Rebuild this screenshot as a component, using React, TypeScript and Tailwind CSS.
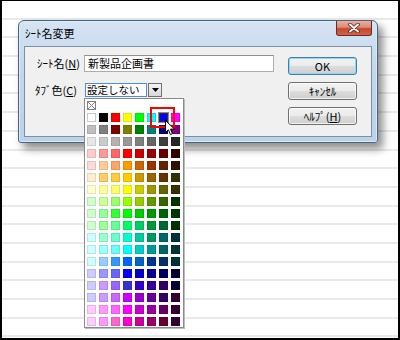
import React from 'react';

const palette: string[][] = [
    ['#ffffff', '#000000', '#ff0000', '#ffff00', '#00ff00', '#00ffff', '#0000ff', '#ff00ff'],
    ['#c0c0c0', '#808080', '#800000', '#808000', '#008000', '#008080', '#000080', '#800080'],
    ['#e6e6e6', '#cccccc', '#b3b3b3', '#999999', '#808080', '#666666', '#404040', '#262626'],
    ['#ffcccc', '#ff9999', '#ff6666', '#ff0000', '#cc0000', '#990000', '#660000', '#330000'],
    ['#ffd9d9', '#ffcc99', '#ffa566', '#ff9900', '#cc6600', '#993300', '#662200', '#331100'],
    ['#ffeecc', '#ffcc66', '#ffcc33', '#ffcc00', '#cc9900', '#996600', '#663300', '#333300'],
    ['#ffffcc', '#ffff99', '#ffff66', '#ffff00', '#cccc00', '#999900', '#666600', '#333300'],
    ['#ccffcc', '#ccff99', '#99ff66', '#99ff00', '#99cc00', '#669900', '#336600', '#003300'],
    ['#ccffcc', '#99ff99', '#33ff33', '#00ff00', '#00cc00', '#009900', '#006600', '#003300'],
    ['#ccffcc', '#99ff99', '#66ff99', '#00ff66', '#00cc66', '#009933', '#006633', '#003300'],
    ['#ccffff', '#99ffcc', '#66ffcc', '#00ffcc', '#00cc99', '#009966', '#006666', '#003333'],
    ['#ccffff', '#99ffff', '#66ffff', '#00ffff', '#00cccc', '#009999', '#006666', '#003333'],
    ['#ccffff', '#99ccff', '#3399ff', '#0066ff', '#0066cc', '#003399', '#003366', '#003333'],
    ['#ccccff', '#9999ff', '#6666ff', '#0000ff', '#0000cc', '#000099', '#000066', '#000033'],
    ['#ccccff', '#cc99ff', '#9966ff', '#3333cc', '#3300cc', '#330099', '#330066', '#000033'],
    ['#ccccff', '#cc99ff', '#cc66ff', '#cc00ff', '#9900cc', '#660099', '#330066', '#330033'],
    ['#ffccff', '#ff99ff', '#ff66ff', '#ff00ff', '#cc00cc', '#990099', '#660066', '#330033'],
    ['#ffccff', '#ff99ff', '#ff66cc', '#ff00cc', '#cc0099', '#990066', '#660033', '#330033'],
];

const font = "font-['Noto_Sans_CJK_JP',sans-serif]";

function VistaButton({ children, isDefault }: { children: React.ReactNode; isDefault?: boolean }) {
    return (
        <div
            className={
                'w-[69px] h-[18px] rounded-[3px] border flex items-center justify-center text-[11px] leading-none text-black bg-[linear-gradient(#f2f2f2_0%,#ebebeb_50%,#dddddd_50%,#cfcfcf_100%)] ' +
                (isDefault
                    ? 'border-[#3c7fb1] shadow-[inset_0_0_0_1px_#8fd6f7]'
                    : 'border-[#707070] shadow-[inset_0_0_0_1px_rgba(255,255,255,0.7)]')
            }
        >
            {children}
        </div>
    );
}

export default function App() {
    return (
        <div className={`relative w-[400px] h-[340px] overflow-hidden bg-white border-black border-t border-x-2 border-b-2 ${font}`}>
            {/* sheet rows behind the dialog */}
            <div className="flex flex-col">
                {Array.from({ length: 18 }).map((_, i) => (
                    <div key={i} className="h-[18.7px] border-b-2 border-[#e9e9e9]" />
                ))}
            </div>

            {/* dialog window */}
            <div className="absolute left-[16px] top-[19px] w-[360px] h-[123px] flex flex-col rounded-t-[6px] rounded-b-[3px] border border-[#4f6177] bg-[linear-gradient(#d6e4f3,#c3d7ee_40%,#bcd2ea)] shadow-[5px_6px_8px_rgba(0,0,0,0.45),inset_0_0_0_1px_rgba(210,240,255,0.9)]">
                {/* title bar */}
                <div className="h-[25px] flex justify-between pl-[6px] pr-[5px]">
                    <span className="self-center text-[11px] text-black leading-none">ｼｰﾄ名変更</span>
                    <div className="w-[36px] h-[15px] rounded-b-[3px] border border-t-0 border-[#6b2a20] bg-[linear-gradient(#eab0a2,#dc8a78_45%,#c7462d_55%,#d2644a)] flex items-center justify-center">
                        <svg width="12" height="10" viewBox="0 0 12 10">
                            <path d="M2 1.5 L10 8.5 M10 1.5 L2 8.5" stroke="#5a1c14" strokeWidth="3.6" strokeLinecap="round" />
                            <path d="M2 1.5 L10 8.5 M10 1.5 L2 8.5" stroke="#ffffff" strokeWidth="2" strokeLinecap="round" />
                        </svg>
                    </div>
                </div>

                {/* client area */}
                <div className="mx-[5px] h-[91px] bg-[#f0f0f0] border border-[#7f8fa3] flex pt-[8px] pl-[10px]">
                    <div className="flex flex-col">
                        <div className="flex items-center h-[17px]">
                            <span className="w-[49px] pl-[2px] text-[11px] leading-none text-black">
                                ｼｰﾄ名(<span className="underline">N</span>)
                            </span>
                            <div className="w-[190px] h-[17px] bg-white border border-[#abadb3] border-t-[#8e8f8f] pl-[3px] flex items-center text-[11px] leading-none text-black">
                                新製品企画書
                            </div>
                        </div>
                        <div className="mt-[11px] flex items-center h-[14px]">
                            <span className="w-[50px] text-[11px] leading-none text-black">
                                ﾀﾌﾞ色(<span className="underline">C</span>)
                            </span>
                            <div className="w-[62px] h-[14px] bg-white border border-[#4b8fd8] pl-[1px] flex items-center text-[10.5px] leading-none text-black">
                                設定しない
                            </div>
                            <div className="ml-[1px] w-[14px] h-[14px] border border-[#707070] bg-[linear-gradient(#f4f4f4,#d8d8d8)] flex items-center justify-center">
                                <svg width="7" height="4" viewBox="0 0 7 4">
                                    <path d="M0 0 H7 L3.5 4 Z" fill="#000" />
                                </svg>
                            </div>
                        </div>
                    </div>
                    <div className="ml-[14px] mt-[2px] flex flex-col gap-[7px]">
                        <VistaButton isDefault>OK</VistaButton>
                        <VistaButton>ｷｬﾝｾﾙ</VistaButton>
                        <VistaButton>
                            ﾍﾙﾌﾟ(<span className="underline">H</span>)
                        </VistaButton>
                    </div>
                </div>
            </div>

            {/* color palette dropdown */}
            <div className="absolute left-[82px] top-[97px] w-[100px] h-[230px] bg-white border border-[#8a8a8a] shadow-[1px_1px_0_#bdbdbd] pl-[2px] pt-[2px]">
                <div className="w-[9px] h-[9px]">
                    <svg width="9" height="9" viewBox="0 0 9 9">
                        <rect x="0.5" y="0.5" width="8" height="8" fill="#fff" stroke="#808080" />
                        <path d="M1 1 L8 8 M8 1 L1 8" stroke="#808080" strokeWidth="1" />
                    </svg>
                </div>
                <div className="mt-[3px] grid grid-cols-[repeat(8,9px)] gap-[3px]">
                    {palette.flatMap((row, r) =>
                        row.map((c, i) => (
                            <div
                                key={`${r}-${i}`}
                                className={
                                    'w-[9px] h-[9px] border ' +
                                    (r === 0 && i === 6
                                        ? 'border-[#303030] outline outline-1 outline-[#8a8a8a]'
                                        : r === 0 && i === 0
                                          ? 'border-[#c8c8c8]'
                                          : 'border-black/10')
                                }
                                style={{ backgroundColor: c }}
                            />
                        ))
                    )}
                </div>

                {/* red annotation around selected colour */}
                <div className="absolute left-[65px] top-[8px] w-[25px] h-[21px] border-2 border-[#ff0000]" />

                {/* mouse pointer */}
                <svg className="absolute left-[80px] top-[21px]" width="11" height="16" viewBox="0 0 11 16">
                    <path d="M0.5 0.5 L0.5 12.5 L3.4 9.8 L5.4 14.6 L7.4 13.7 L5.5 9.1 L9.5 9.1 Z" fill="#fff" stroke="#000" strokeWidth="1" strokeLinejoin="round" />
                </svg>
            </div>
        </div>
    );
}
